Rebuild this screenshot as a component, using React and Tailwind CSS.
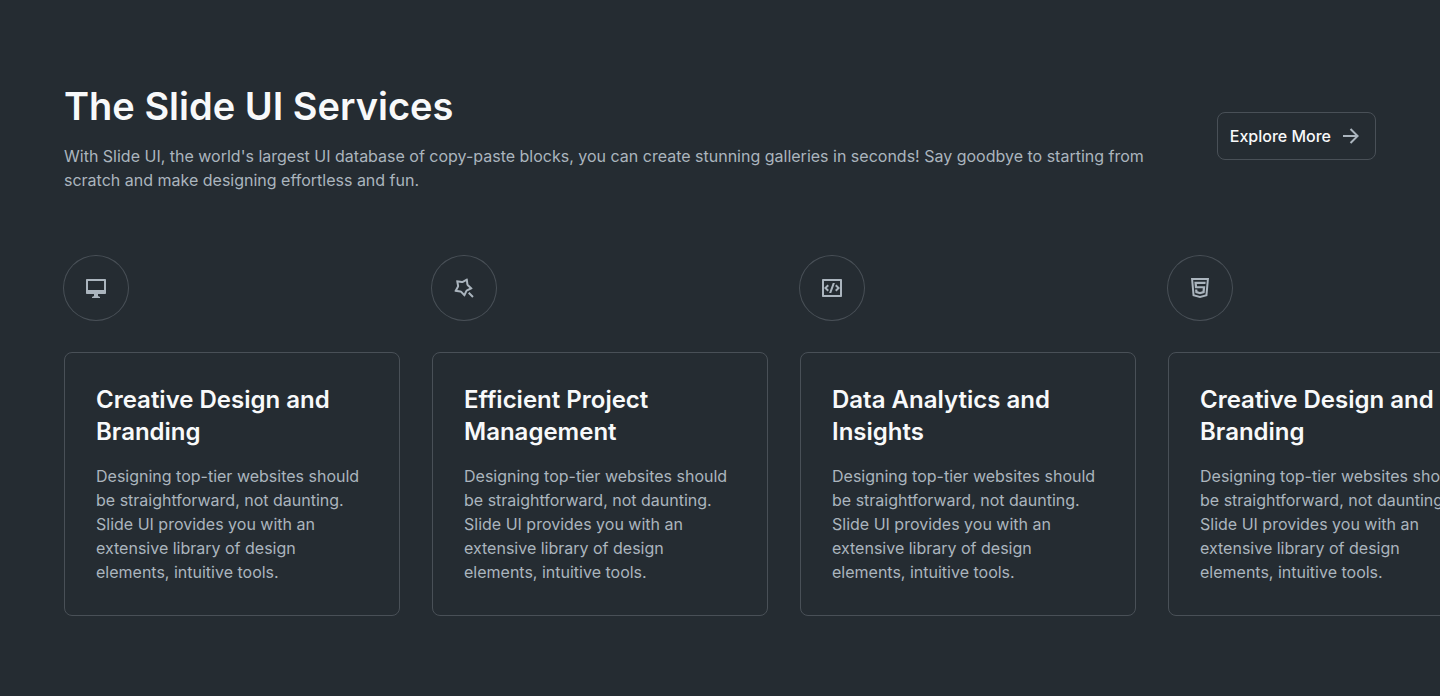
import { RiArrowRightLine, RiCodeBoxLine, RiHtml5Line, RiMacLine, RiMagicLine } from 'react-icons/ri';

const description =
  'Designing top-tier websites should be straightforward, not daunting. Slide UI provides you with an extensive library of design elements, intuitive tools.';

const services = [
  { id: 'design', title: 'Creative Design and Branding', Icon: RiMacLine },
  { id: 'management', title: 'Efficient Project Management', Icon: RiMagicLine },
  { id: 'analytics', title: 'Data Analytics and Insights', Icon: RiCodeBoxLine },
  { id: 'branding', title: 'Creative Design and Branding', Icon: RiHtml5Line },
];

function ServiceCard({ title, Icon }) {
  return (
    <li className="flex w-84 shrink-0 flex-col gap-8">
      <div className="flex size-16 items-center justify-center rounded-full ring-1 ring-[#495057]">
        <Icon className="size-6 text-[#abb5be]" aria-hidden="true" />
      </div>
      <article className="flex flex-col gap-4 rounded-lg border border-[#495057] p-[31px]">
        <h2 className="text-2xl font-semibold text-[#f8f9fa]">{title}</h2>
        <p className="text-base text-[#abb5be]">{description}</p>
      </article>
    </li>
  );
}

export default function App() {
  return (
    <main className="min-h-screen overflow-hidden bg-[#252c32] px-16 py-20 font-['Inter',sans-serif]">
      <header className="flex items-center justify-between gap-16">
        <div className="flex max-w-[1090px] flex-col gap-3">
          <h1 className="text-[38px] leading-13 font-semibold text-[#f8f9fa]">The Slide UI Services</h1>
          <p className="text-base text-[#abb5be]">
            With Slide UI, the world's largest UI database of copy-paste blocks, you can create stunning galleries in
            seconds! Say goodbye to starting from scratch and make designing effortless and fun.
          </p>
        </div>
        <a
          href="#services"
          className="flex h-12 shrink-0 items-center gap-2 rounded-lg border border-[#495057] px-3 text-base font-medium text-[#f8f9fa]"
        >
          Explore More
          <RiArrowRightLine className="size-6 text-[#abb5be]" aria-hidden="true" />
        </a>
      </header>
      <ul id="services" className="mt-16 flex gap-8">
        {services.map((service) => (
          <ServiceCard key={service.id} title={service.title} Icon={service.Icon} />
        ))}
      </ul>
    </main>
  );
}
